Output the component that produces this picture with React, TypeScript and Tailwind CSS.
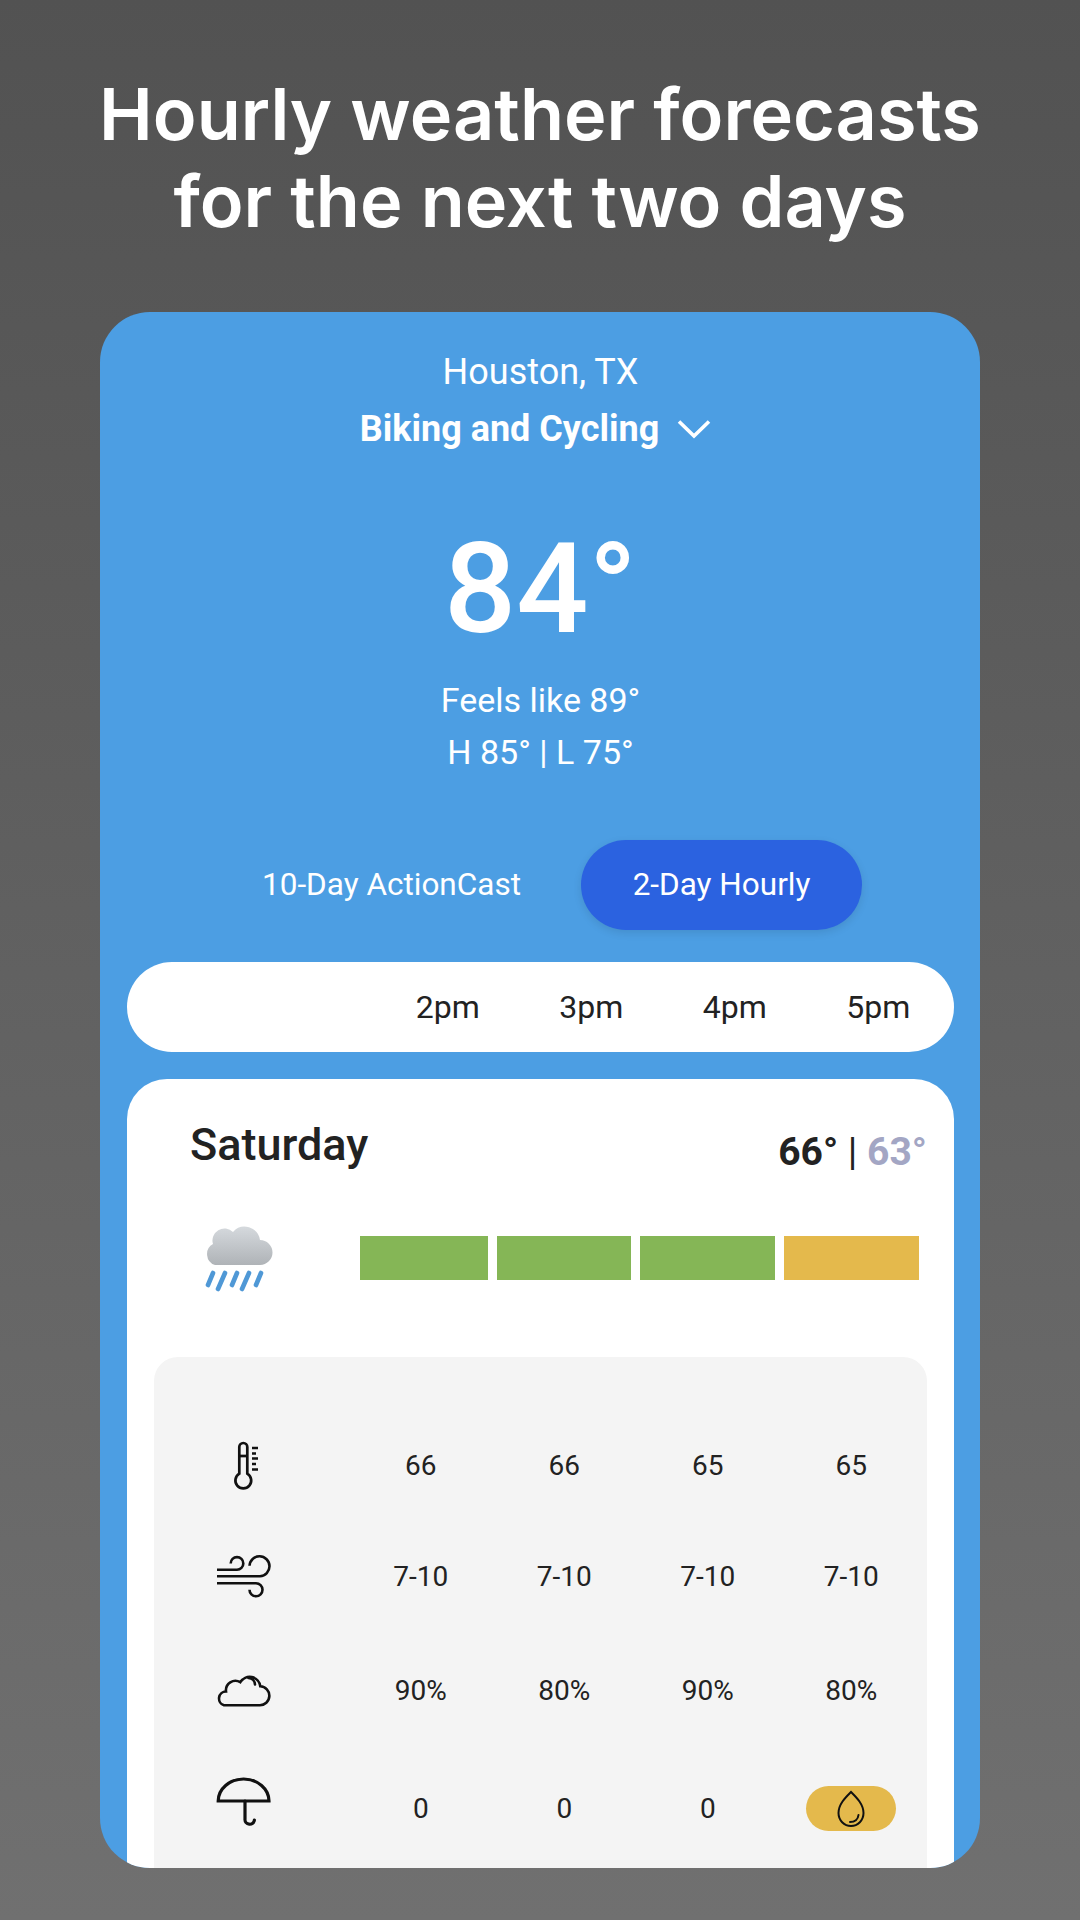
const rows = [
  { icon: <ThermometerIcon />, cells: ['66', '66', '65', '65'], height: 'h-[108px]' },
  { icon: <WindIcon />, cells: ['7-10', '7-10', '7-10', '7-10'], height: 'h-[114px]' },
  { icon: <CloudIcon />, cells: ['90%', '80%', '90%', '80%'], height: 'h-[114px]' },
  { icon: <UmbrellaIcon />, cells: ['0', '0', '0', 'drop'], height: 'h-[121px]' },
];

function RainCloud() {
  return (
    <svg width="120" height="120" viewBox="0 0 120 120" fill="none">
      <defs>
        <linearGradient id="cloudFill" x1="0" y1="0" x2="0" y2="1">
          <stop offset="0" stopColor="#d5d9dd" />
          <stop offset="1" stopColor="#afb3b7" />
        </linearGradient>
      </defs>
      <path
        d="M25 75A11.5 11.5 0 0 1 23 54A12 12 0 0 1 43 42A15.5 15.5 0 0 1 70 50A12.5 12.5 0 0 1 70 75Z"
        fill="url(#cloudFill)"
      />
      <g stroke="#4f98d6" strokeWidth="4.6" strokeLinecap="round">
        <path d="M23 83L18 95" />
        <path d="M35 83L28 99" />
        <path d="M47 83L42 95" />
        <path d="M59 83L52 99" />
        <path d="M71 83L66 95" />
      </g>
    </svg>
  );
}

function ThermometerIcon() {
  return (
    <svg width="60" height="60" viewBox="23 16 60 60" fill="none" stroke="#111" strokeWidth="2.7">
      <path d="M49.3 53.7V27a4 4 0 0 1 8 0V53.7a7.9 7.9 0 1 1-8 0Z" />
      <path d="M49.3 36H57.3" />
      <path strokeWidth="2.6" d="M62 28H68M62 33.5H66M62 38.5H68M62 44H66M62 49.5H68" />
    </svg>
  );
}

function WindIcon() {
  return (
    <svg width="60" height="60" viewBox="23 128 60 60" fill="none" stroke="#111" strokeWidth="2.6">
      <path d="M27 150.7H47a6.3 6.3 0 1 0-6.3-6.3" />
      <path d="M27 157.3H70a10 10 0 1 0-10.5-10.5" />
      <path d="M27 164.3H66a6.5 6.5 0 1 1-6.5 6.5" />
    </svg>
  );
}

function CloudIcon() {
  return (
    <svg width="60" height="60" viewBox="0 0 60 60" fill="none" stroke="#111" strokeWidth="2.6" strokeLinecap="round">
      <path d="M11 44.2H46.5A9.4 9.4 0 0 0 47.3 25.3A10.8 10.8 0 0 0 27.3 21.2A9.5 9.5 0 0 0 13 30.5A7 7 0 0 0 11 44.2Z" />
      <path d="M35.5 17A7 7 0 0 1 42 23.5" />
    </svg>
  );
}

function UmbrellaIcon() {
  return (
    <svg width="60" height="70" viewBox="0 0 60 70" fill="none" stroke="#111" strokeWidth="3.2" strokeLinecap="round">
      <path d="M5.2 27H56A25.4 22 0 0 0 5.2 27Z" />
      <path d="M32 27V45a4.7 4.7 0 0 0 9.4 1" />
    </svg>
  );
}

function DropIcon() {
  return (
    <svg width="30" height="38" viewBox="0 0 30 38" fill="none" stroke="#111" strokeWidth="2" strokeLinecap="round">
      <path d="M15 2C10 7 2.5 14 2.5 23A12.5 13 0 0 0 27.5 23C27.5 14 20 7 15 2Z" />
      <path d="M14 32C19 32 22 29 22.5 25" />
    </svg>
  );
}

export default function App() {
  return (
    <div className="flex h-[1920px] w-[1080px] flex-col items-center overflow-hidden bg-gradient-to-b from-[#525252] to-[#707070] font-['Roboto',sans-serif]">
      <h1 className="mt-[70px] text-center font-['Inter',sans-serif] text-[72px] leading-[87px] font-semibold text-white">
        Hourly weather forecasts
        <br />
        for the next two days
      </h1>

      <div className="mt-[68px] flex h-[1556px] w-[880px] flex-col overflow-hidden rounded-[50px] bg-[#4c9ee3] pr-[26px] pl-[27px]">
        <div className="mt-[36px] text-center text-[36px] leading-[48px] text-white">Houston, TX</div>
        <div className="mt-[9px] flex items-center justify-center gap-[18px] pr-[10px] text-[36px] leading-[48px] font-bold text-white">
          <span>Biking and Cycling</span>
          <svg width="34" height="20" viewBox="0 0 34 20" fill="none" stroke="#fff" strokeWidth="3.6">
            <path d="M2 2.5L17 17L32 2.5" />
          </svg>
        </div>
        <div className="mt-[62px] text-center text-[127px] leading-[148px] font-medium text-white">84°</div>
        <div className="mt-[11px] text-center text-[34px] leading-[52px] text-white">
          <div>Feels like 89°</div>
          <div>H 85° | L 75°</div>
        </div>

        <div className="mt-[62px] flex h-[90px] items-center pl-[135px]">
          <span className="w-[319px] text-[31.5px] text-white">10-Day ActionCast</span>
          <span className="flex h-[90px] w-[281px] items-center justify-center rounded-full bg-[#2b62e0] text-[31.5px] text-white shadow-[0_3px_8px_rgba(0,0,0,0.1)]">
            2-Day Hourly
          </span>
        </div>

        <div className="mt-[32px] grid h-[90px] shrink-0 grid-cols-[249px_repeat(4,143.5px)] items-center rounded-full bg-white text-center text-[32px] text-[#222]">
          <span />
          <span>2pm</span>
          <span>3pm</span>
          <span>4pm</span>
          <span>5pm</span>
        </div>

        <div className="mt-[27px] flex shrink-0 flex-col rounded-t-[40px] bg-white px-[27px]">
          <div className="flex h-[130px] items-start justify-between">
            <span className="mt-[40px] ml-[36px] text-[45px] leading-[52px] font-medium text-[#222]">Saturday</span>
            <span className="mt-[46px] text-[39px] leading-[54px] text-[#222]">
              <span className="font-bold">66°</span> | <span className="font-bold text-[#a3a6c4]">63°</span>
            </span>
          </div>

          <div className="flex h-[148px] items-start">
            <div className="mt-[-19px] ml-[36px] h-[120px] w-[170px]">
              <RainCloud />
            </div>
            <div className="mt-[27px] flex gap-[9px]">
              <div className="h-[44px] w-[128px] bg-[#85b656]" />
              <div className="h-[44px] w-[134px] bg-[#85b656]" />
              <div className="h-[44px] w-[135px] bg-[#85b656]" />
              <div className="h-[44px] w-[135px] bg-[#e4b94c]" />
            </div>
          </div>

          <div className="rounded-t-[24px] bg-[#f4f4f4] pt-[55px]">
            {rows.map((row, i) => (
              <div key={i} className={`grid grid-cols-[195px_repeat(4,143.5px)] items-center text-center text-[28px] text-[#222] ${row.height}`}>
                <div className="flex justify-center pr-[17px]">{row.icon}</div>
                {row.cells.map((cell, j) =>
                  cell === 'drop' ? (
                    <div key={j} className="flex justify-center">
                      <span className="flex h-[45px] w-[90px] items-center justify-center rounded-full bg-[#e4b94c]">
                        <DropIcon />
                      </span>
                    </div>
                  ) : (
                    <span key={j}>{cell}</span>
                  ),
                )}
              </div>
            ))}
          </div>
        </div>
      </div>
    </div>
  );
}
